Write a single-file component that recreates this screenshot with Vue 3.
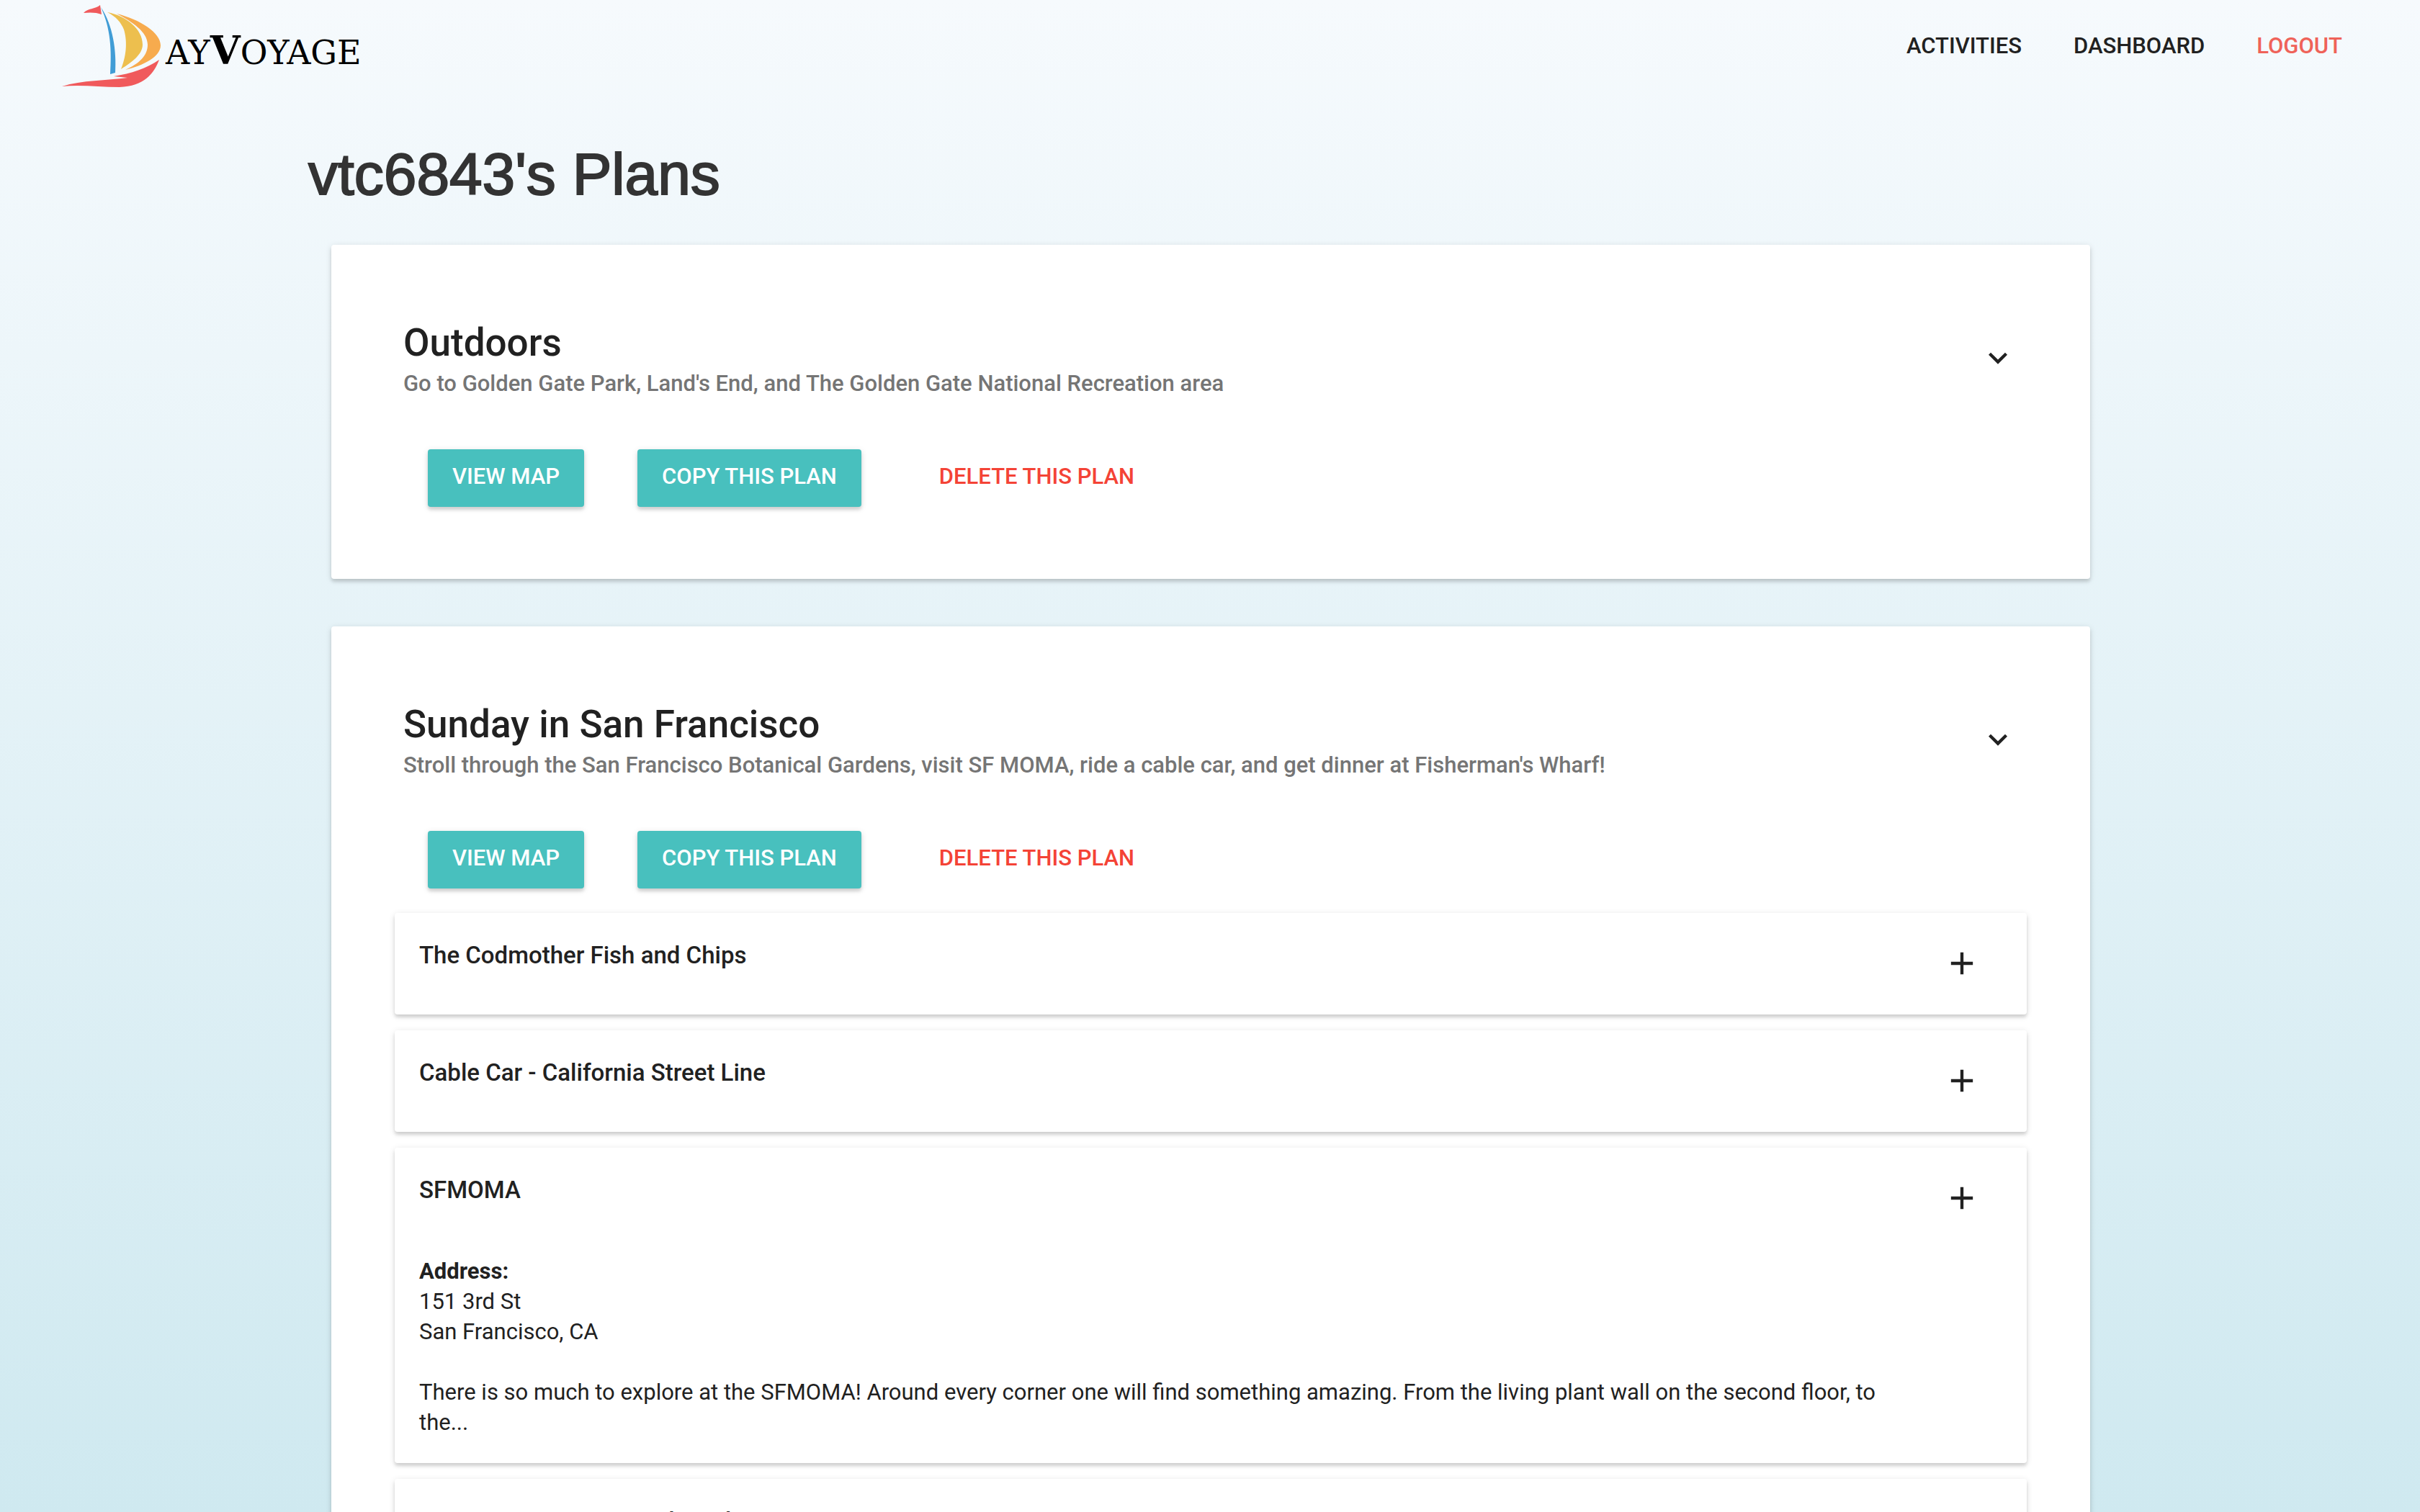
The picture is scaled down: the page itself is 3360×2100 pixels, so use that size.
<script setup>
const nav = [
  { label: 'Activities' },
  { label: 'Dashboard' },
  { label: 'Logout', danger: true },
]

const plans = [
  {
    title: 'Outdoors',
    summary: "Go to Golden Gate Park, Land's End, and The Golden Gate National Recreation area",
    stops: [],
  },
  {
    title: 'Sunday in San Francisco',
    summary:
      "Stroll through the San Francisco Botanical Gardens, visit SF MOMA, ride a cable car, and get dinner at Fisherman's Wharf!",
    stops: [
      { name: 'The Codmother Fish and Chips' },
      { name: 'Cable Car - California Street Line' },
      {
        name: 'SFMOMA',
        street: '151 3rd St',
        city: 'San Francisco, CA',
        about:
          'There is so much to explore at the SFMOMA! Around every corner one will find something amazing. From the living plant wall on the second floor, to the...',
      },
      { name: 'San Francisco Botanical Garden' },
    ],
  },
]
</script>

<template>
  <div class="page">
    <header class="topbar">
      <a class="brand" href="#" aria-label="DayVoyage">
        <svg class="boat" viewBox="0 0 140 124" aria-hidden="true">
          <path fill="#f05a5c" d="M30 18C36 11 46 13 53 7L55 20C48 17 38 17 30 18Z" />
          <path fill="#419dd6" d="M54 10C71 35 76 71 74 101L67 103C69 70 68 40 54 10Z" />
          <path fill="#edbf4e" d="M63 17C89 22 112 40 112 62C112 75 98 86 82 96C91 74 90 54 86 41C82 31 75 23 63 17Z" />
          <path fill="#f7ab4e" d="M76 19C108 27 137 45 137 63C137 79 113 91 88 97C108 88 119 77 119 62C119 44 97 30 76 19Z" />
          <path fill="#f05a5c" d="M0 120C28 111 62 112 91 108L72 106C96 102 118 95 135 83C128 102 114 120 80 121C52 121 26 117 0 120Z" />
        </svg>
        <span class="wordmark">ay<b>V</b>oyage</span>
      </a>
      <nav class="nav">
        <a v-for="n in nav" :key="n.label" href="#" :class="{ danger: n.danger }">{{ n.label }}</a>
      </nav>
    </header>

    <main class="content">
      <h1>vtc6843's Plans</h1>
      <section v-for="plan in plans" :key="plan.title" class="plan">
        <div class="plan-head">
          <div>
            <h2>{{ plan.title }}</h2>
            <p class="summary">{{ plan.summary }}</p>
          </div>
          <button class="icon-button" type="button" aria-label="Expand plan">
            <svg viewBox="0 0 24 24"><path d="M16.6 8.6 12 13.2 7.4 8.6 6 10l6 6 6-6z" /></svg>
          </button>
        </div>
        <div class="actions">
          <button class="raised" type="button">View map</button>
          <button class="raised" type="button">Copy this plan</button>
          <button class="flat" type="button">Delete this plan</button>
        </div>
        <ul v-if="plan.stops.length" class="stops">
          <li v-for="stop in plan.stops" :key="stop.name" class="stop">
            <div class="stop-text">
              <h3>{{ stop.name }}</h3>
              <div v-if="stop.about" class="details">
                <strong>Address:</strong>
                <address>{{ stop.street }}<br />{{ stop.city }}</address>
                <p>{{ stop.about }}</p>
              </div>
            </div>
            <button class="icon-button" type="button" aria-label="Add stop">
              <svg viewBox="0 0 24 24"><path d="M19 13h-6v6h-2v-6H5v-2h6V5h2v6h6z" /></svg>
            </button>
          </li>
        </ul>
      </section>
    </main>
  </div>
</template>

<style>
body {
  margin: 0;
}
</style>

<style scoped>
.page {
  height: 100vh;
  overflow: hidden;
  background: linear-gradient(#f6fafd, #cfe9f0);
  color: #212121;
  font: 31px/42px Roboto, sans-serif;
}
h1,
h2,
h3,
p,
ul {
  margin: 0;
  padding: 0;
}
a {
  color: inherit;
  text-decoration: none;
}
button {
  border: 0;
  padding: 0;
  background: none;
  color: inherit;
  font: inherit;
}
.topbar {
  display: flex;
  justify-content: space-between;
  align-items: flex-start;
  height: 128px;
  padding: 0 108px 0 86px;
}
.brand {
  display: flex;
}
.boat {
  width: 140px;
  height: 124px;
}
.wordmark {
  margin: 40px 0 0 4px;
  font-family: "DejaVu Serif", serif;
  font-size: 46px;
  line-height: 60px;
  color: #000;
  text-transform: uppercase;
}
.wordmark b {
  font-size: 54px;
}
.nav {
  display: flex;
  gap: 72px;
  padding-top: 43px;
  font-weight: 500;
  text-transform: uppercase;
}
.nav .danger {
  color: #ef6259;
}
.content {
  width: 75%;
  margin: 0 auto;
}
h1 {
  padding: 66px 0 50px 8px;
  color: #333;
  font: 82px/96px "Liberation Sans", sans-serif;
  -webkit-text-stroke: 2px #333;
}
.plan {
  box-sizing: border-box;
  min-height: 464px;
  margin: 0 38px 66px 40px;
  padding: 100px 88px 60px;
  border-radius: 4px;
  background: #fff;
}
.plan,
.stop,
.raised {
  box-shadow: 0 2px 10px rgba(0, 0, 0, 0.12), 0 4px 4px rgba(0, 0, 0, 0.12);
}
.plan-head {
  display: flex;
  justify-content: space-between;
  align-items: center;
  padding: 0 14px 0 12px;
}
h2 {
  font-size: 53px;
  font-weight: 500;
  line-height: 72px;
}
.summary {
  color: #757575;
  font-weight: 500;
}
.icon-button {
  width: 52px;
  height: 52px;
}
.icon-button svg {
  display: block;
  width: 52px;
  height: 52px;
  fill: #212121;
}
.actions {
  display: flex;
  gap: 74px;
  padding: 70px 46px 34px;
  font-weight: 500;
  text-transform: uppercase;
}
.raised {
  height: 80px;
  padding: 0 34px 4px;
  border-radius: 4px;
  background: #48c0be;
  color: #fff;
  text-transform: inherit;
}
.flat {
  height: 80px;
  padding: 0 34px 4px;
  color: #f44336;
  text-transform: inherit;
}
.stops {
  list-style: none;
}
.stop {
  display: flex;
  justify-content: space-between;
  min-height: 73px;
  margin-bottom: 22px;
  padding: 38px 64px 30px 34px;
  border-radius: 4px;
}
.stop .icon-button {
  margin-top: 6px;
}
h3 {
  font-size: 33px;
  font-weight: 500;
  line-height: 42px;
}
.stop-text {
  flex: 1;
  margin-right: 76px;
}
.details {
  padding: 71px 0 5px;
}
.details strong {
  display: block;
}
.details address {
  margin-bottom: 42px;
  font-style: normal;
}
</style>
